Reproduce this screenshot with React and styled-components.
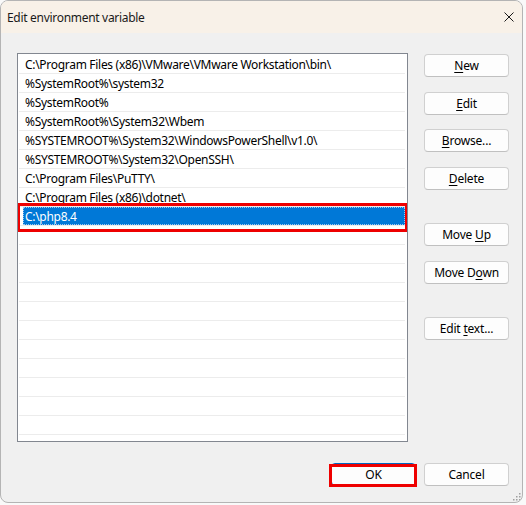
import React from "react";
import styled, { createGlobalStyle } from "styled-components";

const GlobalStyle = createGlobalStyle`
  html, body { margin: 0; padding: 0; background: #f9f9f9; }
  body { font-family: "Noto Sans", "Open Sans", sans-serif; color: #000; }
  * { box-sizing: border-box; }
`;

const Desktop = styled.div`
  width: 526px;
  height: 505px;
  display: flex;
  align-items: flex-start;
`;

const Window = styled.div`
  position: relative;
  width: 523px;
  height: 503px;
  border: 1px solid #b4b4b4;
  border-radius: 8px;
  overflow: hidden;
  background: #f0f0f0;
  display: flex;
  flex-direction: column;
`;

const TitleBar = styled.div`
  height: 32px;
  flex: none;
  background: #f8f1e8;
  display: flex;
  align-items: center;
  justify-content: space-between;
  padding: 0 7px 0 6px;
`;

const Title = styled.span`
  font-size: 12px;
  color: #1a1a1a;
  letter-spacing: -0.3px;
`;

const CloseButton = styled.span`
  width: 10px;
  height: 10px;
  display: flex;
  margin-right: 1px;
`;

const Body = styled.div`
  flex: 1;
  display: flex;
  flex-direction: column;
  padding: 20px 13px 0 16px;
`;

const Main = styled.div`
  display: flex;
  gap: 16px;
`;

const ListBox = styled.div`
  width: 391px;
  height: 389px;
  border: 1px solid #828790;
  background: #fff;
  overflow: hidden;
  padding: 1px 2px 0 1px;
`;

const Row = styled.div`
  height: 19px;
  border-bottom: 1px solid #ececec;
  padding-left: 4px;
  display: flex;
`;

const Label = styled.div`
  position: relative;
  flex: 1;
  height: 18px;
  line-height: 18px;
  padding: 1px 0 0 2px;
  font-size: 12px;
  letter-spacing: -0.3px;
  white-space: nowrap;
  color: ${(p) => (p.$selected ? "#fff" : "#000")};
  background: ${(p) => (p.$selected ? "#0078d7" : "transparent")};
  outline: ${(p) => (p.$selected ? "1px dotted #9fc7ee" : "none")};
  outline-offset: -1px;
`;

const RedMark = styled.span`
  position: absolute;
  top: ${(p) => p.$inset[0]}px;
  right: ${(p) => p.$inset[1]}px;
  bottom: ${(p) => p.$inset[2]}px;
  left: ${(p) => p.$inset[3]}px;
  border: 3px solid #ee0000;
  pointer-events: none;
`;

const ButtonColumn = styled.div`
  margin-top: 1px;
  display: flex;
  flex-direction: column;
  gap: 33.5px;
`;

const ButtonGroup = styled.div`
  display: flex;
  flex-direction: column;
  gap: 14.5px;
`;

const Button = styled.button`
  position: relative;
  width: 85px;
  height: 23px;
  padding: 0;
  font-family: inherit;
  font-size: 12px;
  letter-spacing: -0.2px;
  color: #000;
  background: #fdfdfd;
  border: 1px solid ${(p) => (p.$default ? "#0067c0" : "#d0d0d0")};
  border-bottom-color: ${(p) => (p.$default ? "#0067c0" : "#c0c0c0")};
  border-radius: 4px;
  display: flex;
  align-items: center;
  justify-content: center;
  u { text-decoration-thickness: 1px; text-underline-offset: 2px; }
`;

const Caption = styled.span`
  white-space: pre;
`;

const Footer = styled.div`
  margin-top: 21px;
  display: flex;
  justify-content: flex-end;
  gap: 8px;
`;

const Grip = styled.svg`
  position: absolute;
  right: 1px;
  bottom: 1px;
`;

const paths = [
  "C:\\Program Files (x86)\\VMware\\VMware Workstation\\bin\\",
  "%SystemRoot%\\system32",
  "%SystemRoot%",
  "%SystemRoot%\\System32\\Wbem",
  "%SYSTEMROOT%\\System32\\WindowsPowerShell\\v1.0\\",
  "%SYSTEMROOT%\\System32\\OpenSSH\\",
  "C:\\Program Files\\PuTTY\\",
  "C:\\Program Files (x86)\\dotnet\\",
  "C:\\php8.4",
];

const rows = [...paths, ...Array(12).fill("")];

export default function App() {
  return (
    <>
      <GlobalStyle />
      <Desktop>
        <Window>
          <TitleBar>
            <Title>Edit environment variable</Title>
            <CloseButton>
              <svg width="10" height="10" viewBox="0 0 10 10">
                <path d="M0.5 0.5 L9.5 9.5 M9.5 0.5 L0.5 9.5" stroke="#1a1a1a" strokeWidth="1" />
              </svg>
            </CloseButton>
          </TitleBar>
          <Body>
            <Main>
              <ListBox>
                {rows.map((text, i) => {
                  const selected = i === 8;
                  return (
                    <Row key={i}>
                      <Label $selected={selected}>
                        {text}
                        {selected && <RedMark $inset={[-4, -3, -7, -6]} />}
                      </Label>
                    </Row>
                  );
                })}
              </ListBox>
              <ButtonColumn>
                <ButtonGroup>
                  <Button><Caption><u>N</u>ew</Caption></Button>
                  <Button><Caption><u>E</u>dit</Caption></Button>
                  <Button><Caption><u>B</u>rowse...</Caption></Button>
                  <Button><Caption><u>D</u>elete</Caption></Button>
                </ButtonGroup>
                <ButtonGroup>
                  <Button><Caption>Move <u>U</u>p</Caption></Button>
                  <Button><Caption>Move D<u>o</u>wn</Caption></Button>
                </ButtonGroup>
                <ButtonGroup>
                  <Button><Caption>Edit <u>t</u>ext...</Caption></Button>
                </ButtonGroup>
              </ButtonColumn>
            </Main>
            <Footer>
              <Button $default>
                <Caption>OK</Caption>
                <RedMark $inset={[0, -2, -2, -3]} />
              </Button>
              <Button><Caption>Cancel</Caption></Button>
            </Footer>
          </Body>
          <Grip width="10" height="10" viewBox="0 0 10 10">
            {[[8, 2], [8, 5], [5, 5], [8, 8], [5, 8], [2, 8]].map(([x, y], i) => (
              <rect key={i} x={x} y={y} width="1.5" height="1.5" fill="#a0a0a0" />
            ))}
          </Grip>
        </Window>
      </Desktop>
    </>
  );
}
